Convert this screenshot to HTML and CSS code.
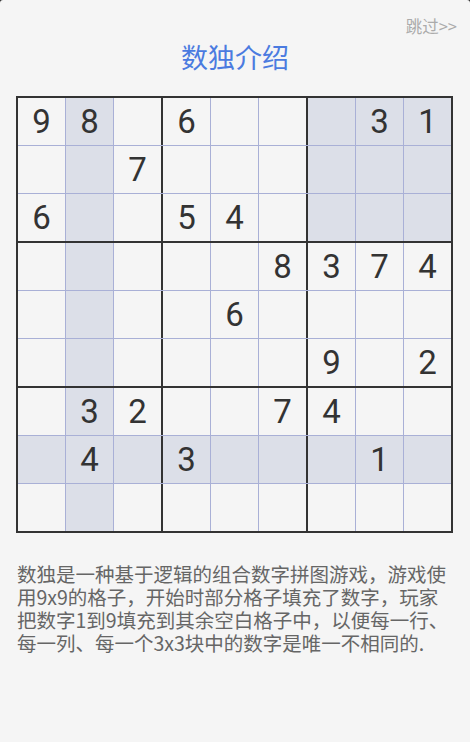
FILE: index.html
```html
<!DOCTYPE html>
<html lang="zh-CN">
<head>
    <meta charset="UTF-8">
    <meta name="viewport" content="width=device-width, initial-scale=1.0">
    <title>数独介绍</title>
    <link rel="stylesheet" href="styles.css">
</head>
<body>

<div class="page">
    <!-- Skip link -->
    <div class="top-bar">
        <a class="skip" href="#">跳过&gt;&gt;</a>
    </div>

    <h1 class="title">数独介绍</h1>

    <!-- Sudoku board -->
    <div class="board">
        <div class="row">
            <div class="cell">9</div><div class="cell hl">8</div><div class="cell"></div>
            <div class="cell">6</div><div class="cell"></div><div class="cell"></div>
            <div class="cell hl"></div><div class="cell hl">3</div><div class="cell hl">1</div>
        </div>
        <div class="row">
            <div class="cell"></div><div class="cell hl"></div><div class="cell">7</div>
            <div class="cell"></div><div class="cell"></div><div class="cell"></div>
            <div class="cell hl"></div><div class="cell hl"></div><div class="cell hl"></div>
        </div>
        <div class="row">
            <div class="cell">6</div><div class="cell hl"></div><div class="cell"></div>
            <div class="cell">5</div><div class="cell">4</div><div class="cell"></div>
            <div class="cell hl"></div><div class="cell hl"></div><div class="cell hl"></div>
        </div>
        <div class="row">
            <div class="cell"></div><div class="cell hl"></div><div class="cell"></div>
            <div class="cell"></div><div class="cell"></div><div class="cell">8</div>
            <div class="cell">3</div><div class="cell">7</div><div class="cell">4</div>
        </div>
        <div class="row">
            <div class="cell"></div><div class="cell hl"></div><div class="cell"></div>
            <div class="cell"></div><div class="cell">6</div><div class="cell"></div>
            <div class="cell"></div><div class="cell"></div><div class="cell"></div>
        </div>
        <div class="row">
            <div class="cell"></div><div class="cell hl"></div><div class="cell"></div>
            <div class="cell"></div><div class="cell"></div><div class="cell"></div>
            <div class="cell">9</div><div class="cell"></div><div class="cell">2</div>
        </div>
        <div class="row">
            <div class="cell"></div><div class="cell hl">3</div><div class="cell">2</div>
            <div class="cell"></div><div class="cell"></div><div class="cell">7</div>
            <div class="cell">4</div><div class="cell"></div><div class="cell"></div>
        </div>
        <div class="row">
            <div class="cell hl"></div><div class="cell hl">4</div><div class="cell hl"></div>
            <div class="cell hl">3</div><div class="cell hl"></div><div class="cell hl"></div>
            <div class="cell hl"></div><div class="cell hl">1</div><div class="cell hl"></div>
        </div>
        <div class="row">
            <div class="cell"></div><div class="cell hl"></div><div class="cell"></div>
            <div class="cell"></div><div class="cell"></div><div class="cell"></div>
            <div class="cell"></div><div class="cell"></div><div class="cell"></div>
        </div>
    </div>

    <p class="intro">数独是一种基于逻辑的组合数字拼图游戏，游戏使用9x9的格子，开始时部分格子填充了数字，玩家把数字1到9填充到其余空白格子中，以便每一行、每一列、每一个3x3块中的数字是唯一不相同的.</p>
</div>

</body>
</html>
```

FILE: styles.css
```css
/* General page styling */
html {
    background-color: #2b2b2b;
}

body {
    margin: 0;
    padding: 0;
    font-family: "Noto Sans CJK SC", Roboto, sans-serif;
}

.page {
    min-height: 742px;
    background-color: #f5f5f5;
    border-radius: 3px 3px 0 0;
    padding: 0 16px;
    box-sizing: border-box;
}

.top-bar {
    display: flex;
    justify-content: flex-end;
    padding-top: 16px;
    margin-right: -3px;
}

.skip {
    color: #ababab;
    font-size: 16.5px;
    line-height: 20px;
    text-decoration: none;
}

.title {
    margin: 4px 0 22px;
    text-align: center;
    color: #4b7be0;
    font-size: 27px;
    font-weight: normal;
    line-height: 34px;
}

/* Sudoku board */
.board {
    display: inline-flex;
    flex-direction: column;
    border: 2px solid #333;
}

.row {
    display: flex;
    border-bottom: 1px solid #a9b0d6;
}

.row:nth-child(3),
.row:nth-child(6) {
    border-bottom: 2px solid #333;
}

.row:last-child {
    border-bottom: none;
}

.cell {
    width: 47px;
    height: 47px;
    border-right: 1px solid #a9b0d6;
    display: flex;
    align-items: center;
    justify-content: center;
    font-family: Roboto, sans-serif;
    font-size: 33px;
    color: #333;
}

.cell:nth-child(3),
.cell:nth-child(6) {
    border-right: 2px solid #333;
}

.cell:last-child {
    border-right: none;
}

.cell.hl {
    background-color: #dcdfe8;
}

.intro {
    margin: 29px 0 0 1px;
    color: #666;
    font-size: 19.5px;
    line-height: 23px;
}
```
